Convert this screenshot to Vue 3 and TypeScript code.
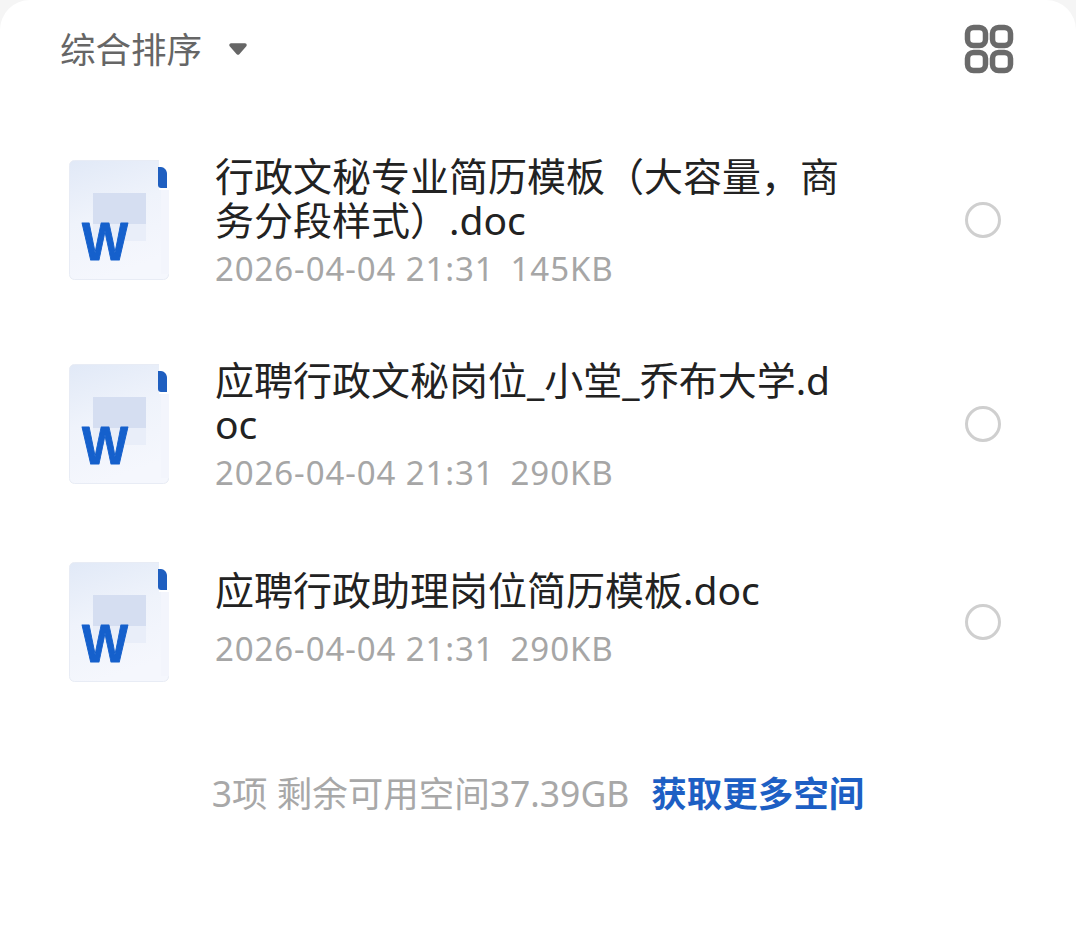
<script setup lang="ts">
interface FileItem {
  id: number
  name: string
  time: string
  size: string
  single?: boolean
}

const files: FileItem[] = [
  { id: 1, name: '行政文秘专业简历模板（大容量，商务分段样式）.doc', time: '2026-04-04 21:31', size: '145KB' },
  { id: 2, name: '应聘行政文秘岗位_小堂_乔布大学.doc', time: '2026-04-04 21:31', size: '290KB' },
  { id: 3, name: '应聘行政助理岗位简历模板.doc', time: '2026-04-04 21:31', size: '290KB', single: true },
]
</script>

<template>
  <div class="screen">
    <div class="sheet">
      <header class="toolbar">
        <div class="sort">
          <span class="sort-label">综合排序</span>
          <svg class="caret" width="20" height="14" viewBox="0 0 20 14">
            <path d="M3 3h14l-7 8z" fill="#666" stroke="#666" stroke-width="3.500" stroke-linejoin="round" />
          </svg>
        </div>
        <svg class="grid-icon" width="50" height="50" viewBox="0 0 50 50" fill="none" stroke="#6a6a6a" stroke-width="5.500">
          <rect x="3.500" y="3.500" width="18" height="18" rx="6" />
          <rect x="28.500" y="3.500" width="18" height="18" rx="6" />
          <rect x="3.500" y="28.500" width="18" height="18" rx="6" />
          <rect x="28.500" y="28.500" width="18" height="18" rx="6" />
        </svg>
      </header>

      <ul class="list">
        <li v-for="file in files" :key="file.id" class="row" :class="{ 'row-single': file.single }">
          <svg class="doc" width="102" height="120" viewBox="0 0 102 120">
            <defs>
              <linearGradient :id="`page${file.id}`" x1="0" y1="0" x2="0.3" y2="1">
                <stop offset="0" stop-color="#e1e9f7" />
                <stop offset="0.5" stop-color="#eff3fb" />
                <stop offset="1" stop-color="#f5f7fd" />
              </linearGradient>
            </defs>
            <rect x="0.500" y="0.500" width="99" height="119" rx="5" :fill="`url(#page${file.id})`" stroke="#e8ecf5" />
            <rect x="90" y="-1" width="12" height="31" fill="#fff" />
            <path d="M89 7h3c3 0 6 3 6 7v14h-6c-1.700 0-3-1.300-3-3z" fill="#1f5fc0" />
            <path d="M92 30h8v84h-8z" fill="#f3f5fc" />
            <rect x="24" y="60" width="53" height="21" fill="#e9eef9" />
            <rect x="24" y="33" width="53" height="31" fill="#d5deF1" />
            <text class="doc-w" x="13" y="100" textLength="46" lengthAdjust="spacingAndGlyphs">W</text>
          </svg>
          <div class="info">
            <div class="name">{{ file.name }}</div>
            <div class="meta"><span>{{ file.time }}</span><span>{{ file.size }}</span></div>
          </div>
          <span class="radio"></span>
        </li>
      </ul>

      <footer class="summary">
        <span>3项 剩余可用空间37.39GB</span>
        <span class="more">获取更多空间</span>
      </footer>
    </div>
  </div>
</template>

<style scoped>
.screen {
  height: 944px;
  background: #f5f5f5;
  font-family: "Noto Sans", "Noto Sans CJK SC", sans-serif;
  overflow: hidden;
}
.sheet {
  height: 100%;
  background: #fff;
  border-radius: 30px 30px 0 0;
  box-sizing: border-box;
  padding-top: 24px;
}
.toolbar {
  display: flex;
  align-items: center;
  justify-content: space-between;
  padding: 0 61px 0 60px;
  height: 50px;
}
.sort {
  display: flex;
  align-items: center;
  gap: 26px;
}
.sort-label {
  font-size: 35.500px;
  line-height: 50px;
  color: #666;
}
.caret {
  display: block;
}
.grid-icon {
  display: block;
  margin-right: 1px;
}
.list {
  list-style: none;
  margin: 75px 0 0;
  padding: 0 75px 0 69px;
  display: flex;
  flex-direction: column;
  gap: 63px;
}
.row {
  display: flex;
  align-items: center;
}
.row-single {
  min-height: 129px;
}
.doc {
  flex: none;
  display: block;
  overflow: visible;
}
.doc-w {
  font-family: "Liberation Sans", sans-serif;
  font-weight: 700;
  font-size: 54px;
  fill: #1560cc;
  stroke: #1560cc;
  stroke-width: 1px;
  stroke-linejoin: round;
}
.info {
  flex: 1;
  min-width: 0;
  margin-left: 44px;
  margin-right: 130px;
  padding-top: 5px;
}
.row-single .info {
  padding-bottom: 11px;
}
.name {
  font-size: 39px;
  line-height: 44px;
  color: #222;
  word-break: break-all;
  width: 624px;
}
.row-single .name {
  margin-bottom: 16px;
}
.meta {
  display: flex;
  gap: 16px;
  margin-top: 6px;
  font-size: 33px;
  line-height: 42px;
  letter-spacing: 0.9px;
  color: #a6a6a6;
}
.radio {
  flex: none;
  width: 36px;
  height: 36px;
  box-sizing: border-box;
  border: 3px solid #cfcfcf;
  border-radius: 50%;
}
.summary {
  display: flex;
  justify-content: center;
  gap: 22px;
  margin-top: 85px;
  font-size: 35.500px;
  line-height: 44px;
  color: #a8a8a8;
}
.more {
  color: #1d5fc4;
  font-weight: 700;
}
</style>
